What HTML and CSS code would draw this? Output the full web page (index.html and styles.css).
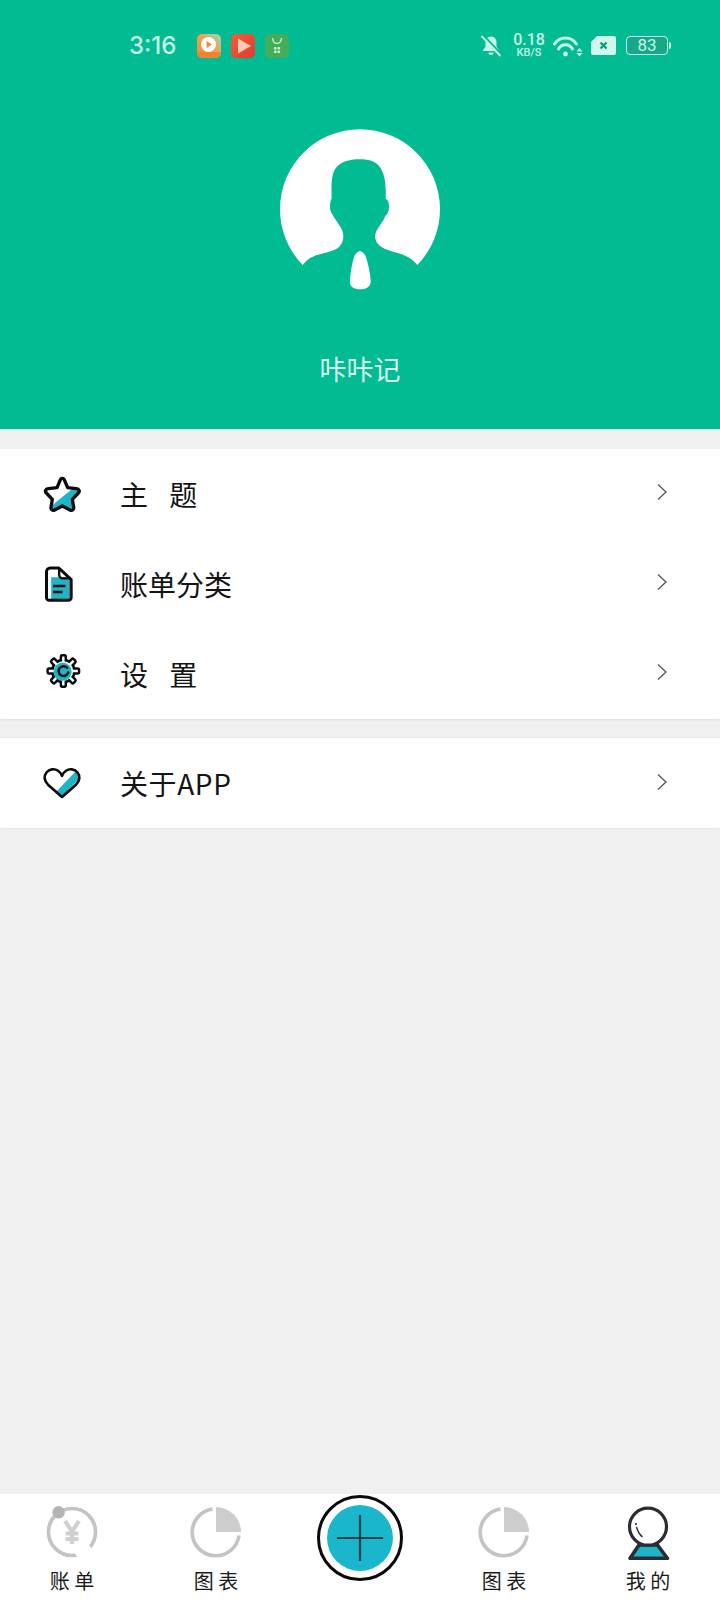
FILE: index.html
```html
<!DOCTYPE html>
<html lang="zh-CN">
<head>
<meta charset="utf-8">
<title>咔咔记</title>
<link rel="stylesheet" href="styles.css">
</head>
<body>
<div class="page">
  <header class="hero">
    <div class="status">
      <div class="status-left">
        <span class="time">3:16</span>
        <svg class="app" viewBox="0 0 24 24"><defs><linearGradient id="g1" x1="0" y1="1" x2="1" y2="0"><stop offset="0" stop-color="#f58a34"/><stop offset=".55" stop-color="#f2a055"/><stop offset="1" stop-color="#8fdcc0"/></linearGradient></defs><rect width="24" height="24" rx="5" fill="url(#g1)"/><path d="M0 18h24v1a5 5 0 0 1-5 5H5a5 5 0 0 1-5-5z" fill="#f0842e"/><circle cx="11.500" cy="10.500" r="7.500" fill="#fff"/><path d="M9.500 7l5.500 3.500L9.500 14z" fill="#f08a3a"/></svg>
        <svg class="app" viewBox="0 0 24 24"><defs><linearGradient id="g2" x1="0" y1="0" x2="1" y2="1"><stop offset="0" stop-color="#f2603a"/><stop offset="1" stop-color="#e03a2a"/></linearGradient></defs><rect width="24" height="24" rx="5" fill="url(#g2)"/><path d="M7 4.500l13 7.500-13 7.500z" fill="#ffc9b8"/></svg>
        <svg class="app" viewBox="0 0 24 24"><rect width="24" height="24" rx="5" fill="#43ad5a"/><path d="M7.500 4c.5 4 2.500 5.500 4.500 5.500S16 8 16.500 4" fill="none" stroke="#c9f0cf" stroke-width="1.400"/><g fill="#d9f5dd"><rect x="9" y="13" width="2.600" height="2.600" rx=".8"/><rect x="12.500" y="13" width="2.600" height="2.600" rx=".8"/><rect x="9" y="16.500" width="2.600" height="2.600" rx=".8"/><rect x="12.500" y="16.500" width="2.600" height="2.600" rx=".8"/></g></svg>
      </div>
      <div class="status-right">
        <svg class="bell" viewBox="0 0 22 22"><path d="M11 1.500c-4 0-5.500 3-5.500 6v4L2.500 16h17l-3-4.500v-4c0-3-1.500-6-5.500-6z" fill="#c6f4e4"/><path d="M8.500 17.500a2.500 2.500 0 0 0 5 0z" fill="#c6f4e4"/><path d="M3 0l19 20" stroke="#01bb93" stroke-width="2"/><path d="M1.500 1l19 20" stroke="#c6f4e4" stroke-width="2"/></svg>
        <div class="speed"><span class="speed-num">0.18</span><span class="speed-unit">KB/S</span></div>
        <svg class="wifi" viewBox="0 0 30 22"><g fill="none" stroke="#c6f4e4" stroke-width="3" stroke-linecap="round"><path d="M1.500 9A13 13 0 0 1 23.500 9"/><path d="M5.500 14A7.800 7.800 0 0 1 19.500 14"/></g><circle cx="12.500" cy="19" r="2.400" fill="#c6f4e4"/><path d="M23.500 16.500l3-3.500 3 3.500zM23.500 18l3 3.500 3-3.500z" fill="#c6f4e4"/></svg>
        <svg class="sim" viewBox="0 0 25 19"><path d="M6 0h17a2 2 0 0 1 2 2v15a2 2 0 0 1-2 2H2a2 2 0 0 1-2-2V6z" fill="#d3f6ea"/><path d="M9.500 6.500l6 6M15.500 6.500l-6 6" stroke="#01a17f" stroke-width="2.200"/></svg>
        <div class="battery"><span class="battery-body">83</span><span class="battery-tip"></span></div>
      </div>
    </div>
    <svg class="avatar" viewBox="60 57 480 483">
      <path fill="#fff" d="M128 465A240 240 0 1 1 472 465C458 448 445 441 425 433C400 425 368 420 352 400C342 385 345 370 352 358C360 345 372 330 376 318C385 312 389 295 386 280C385 272 381 268 377 267C378 240 378 200 362 175C350 155 330 148 298 148C268 148 240 155 225 178C213 198 214 235 215 265C210 275 208 295 213 306C222 325 240 345 247 362C252 378 252 395 238 410C222 425 190 428 165 437C148 444 138 452 128 465Z"/>
      <path fill="#fff" d="M300 423C308 425 315 432 318 442C325 465 331 490 332 512C333 530 318 538 300 538C282 538 268 530 270 512C271 490 275 465 282 442C285 432 292 425 300 423Z"/>
    </svg>
    <div class="name">咔咔记</div>
  </header>

  <section class="group group-first">
    <div class="row">
      <svg class="row-icon" viewBox="30 37 132 132">
        <path d="M130 85l15 2 4 12-20 20 5 28-14 6-23-12-28 14-5-12 5-8z" fill="#1fb5c9"/>
        <path d="M97 56c3 0 6 3 7 7l9 21 26 3c9 1 11 8 6 13l-18 19 4 24c1 7-5 11-11 8l-23-12-23 12c-6 3-12-1-11-8l4-24-18-19c-5-5-3-12 6-13l26-3 9-21c1-4 4-7 7-7z" fill="none" stroke="#0b0b0b" stroke-width="10" stroke-linejoin="round"/>
      </svg>
      <span class="row-label spaced">主 题</span>
      <svg class="chevron" viewBox="0 0 10 18"><path d="M1 1.500l8 7.500-8 7.500" fill="none" stroke="#555" stroke-width="1.300"/></svg>
    </div>
    <div class="row">
      <svg class="row-icon" viewBox="29.500 299 132 132">
        <path d="M63 345h35l21 0v62a6 6 0 0 1-6 6H63z" fill="#1fb5c9"/>
        <path d="M60 317h26l37 35v54a8 8 0 0 1-8 8H57a8 8 0 0 1-8-8V328a11 11 0 0 1 11-11z" fill="none" stroke="#0b0b0b" stroke-width="9" stroke-linejoin="round"/>
        <path d="M87 318v20a10 10 0 0 0 10 10h25" fill="none" stroke="#0b0b0b" stroke-width="7"/>
        <path d="M69 371h37M69 389h28" stroke="#0b0b0b" stroke-width="7"/>
      </svg>
      <span class="row-label">账单分类</span>
      <svg class="chevron" viewBox="0 0 10 18"><path d="M1 1.500l8 7.500-8 7.500" fill="none" stroke="#555" stroke-width="1.300"/></svg>
    </div>
    <div class="row">
      <svg class="row-icon" viewBox="30 575 132 132">
        <g transform="translate(100 632) scale(1.05)">
          <circle r="32" fill="#fff" stroke="#0b0b0b" stroke-width="7"/>
          <g fill="#fff" stroke="#0b0b0b" stroke-width="7">
            <rect x="-7" y="-45" width="14" height="24" rx="4"/>
            <rect x="-7" y="-45" width="14" height="24" rx="4" transform="rotate(45)"/>
            <rect x="-7" y="-45" width="14" height="24" rx="4" transform="rotate(90)"/>
            <rect x="-7" y="-45" width="14" height="24" rx="4" transform="rotate(135)"/>
            <rect x="-7" y="-45" width="14" height="24" rx="4" transform="rotate(180)"/>
            <rect x="-7" y="-45" width="14" height="24" rx="4" transform="rotate(225)"/>
            <rect x="-7" y="-45" width="14" height="24" rx="4" transform="rotate(270)"/>
            <rect x="-7" y="-45" width="14" height="24" rx="4" transform="rotate(315)"/>
          </g>
          <circle r="28" fill="#fff"/>
          <circle cx="-2" cy="2" r="26" fill="#1fb5c9"/>
          <path d="M11 -9A14 14 0 1 0 14 4" fill="none" stroke="#0b0b0b" stroke-width="7" stroke-linecap="round"/>
        </g>
      </svg>
      <span class="row-label spaced">设 置</span>
      <svg class="chevron" viewBox="0 0 10 18"><path d="M1 1.500l8 7.500-8 7.500" fill="none" stroke="#555" stroke-width="1.300"/></svg>
    </div>
  </section>

  <section class="group group-second">
    <div class="row">
      <svg class="row-icon" viewBox="120 182 132 132">
        <path d="M228 212L170 273l16 16 50-52c5-10 2-20-8-25z" fill="#1fb5c9"/>
        <path d="M186 226c-5-12-17-21-30-19-14 2-23 14-22 27 1 7 4 13 10 19l42 37 42-37c6-6 9-12 10-19 1-13-8-25-22-27-13-2-25 7-30 19z" fill="none" stroke="#0b0b0b" stroke-width="8" stroke-linejoin="round"/>
      </svg>
      <span class="row-label latin-wide">关于APP</span>
      <svg class="chevron chevron-last" viewBox="0 0 10 18"><path d="M1 1.500l8 7.500-8 7.500" fill="none" stroke="#555" stroke-width="1.300"/></svg>
    </div>
  </section>

  <div class="spacer"></div>

  <nav class="tabbar">
    <div class="tab">
      <svg class="tab-icon" viewBox="0 0 56 56">
        <circle cx="28" cy="28" r="23.500" fill="none" stroke="#c4c4c4" stroke-width="3.600"/>
        <circle cx="14.600" cy="8.300" r="6.200" fill="#b4b4b4"/>
        <circle cx="39.500" cy="47.500" r="8.500" fill="#fff"/>
        <path d="M21 17L28 27.500l7-10.500M28 27.500V40M21.500 29.500h13M21.500 35h13" fill="none" stroke="#d0d0d0" stroke-width="4.200"/>
      </svg>
      <span class="tab-label">账 单</span>
    </div>
    <div class="tab">
      <svg class="tab-icon" viewBox="0 0 56 56">
        <path d="M24.500 5a23.500 23.500 0 1 0 26.500 26.500" fill="none" stroke="#c4c4c4" stroke-width="3.600"/>
        <path d="M28 3a25 25 0 0 1 25 25H28z" fill="#cdcdcd"/>
      </svg>
      <span class="tab-label">图 表</span>
    </div>
    <div class="tab tab-add">
      <div class="add-ring"><div class="add-core"><svg class="add-plus" viewBox="0 0 46 46"><path d="M0 23h46M23 0v46" stroke="#123f48" stroke-width="2.200"/></svg></div></div>
    </div>
    <div class="tab">
      <svg class="tab-icon" viewBox="0 0 56 56">
        <path d="M24.500 5a23.500 23.500 0 1 0 26.500 26.500" fill="none" stroke="#c4c4c4" stroke-width="3.600"/>
        <path d="M28 3a25 25 0 0 1 25 25H28z" fill="#cdcdcd"/>
      </svg>
      <span class="tab-label">图 表</span>
    </div>
    <div class="tab">
      <svg class="tab-icon" viewBox="0 0 56 56">
        <path d="M19 41h18.500l9.900 13.300H10z" fill="#1fb5c9"/>
        <path d="M19 41h18.500l9.900 13.300H10z" fill="none" stroke="#2a2e32" stroke-width="3.600" stroke-linejoin="round"/>
        <circle cx="28" cy="22.700" r="18.500" fill="#fff" stroke="#2a2e32" stroke-width="3.200"/>
        <path d="M16.500 23c1 4 3 7.500 6 10" fill="none" stroke="#2a2e32" stroke-width="1.400"/>
        <circle cx="16" cy="20" r="1.100" fill="#2a2e32"/>
      </svg>
      <span class="tab-label">我 的</span>
    </div>
  </nav>
</div>
</body>
</html>
```

FILE: styles.css
```css
* { box-sizing: border-box; }

html, body {
  margin: 0;
  padding: 0;
}

body {
  font-family: "Noto Sans CJK SC", "Noto Sans", sans-serif;
  background: #f0f0f0;
  color: #111;
}

.page {
  width: 720px;
  height: 1600px;
  display: flex;
  flex-direction: column;
  background: #f0f0f0;
  overflow: hidden;
}

.hero {
  height: 429px;
  flex: none;
  background: #01bb93;
  display: flex;
  flex-direction: column;
  align-items: center;
  box-shadow: 0 2px 3px #def9f3;
}

.status {
  width: 100%;
  height: 129px;
  flex: none;
  padding: 34px 49px 0 129px;
  display: flex;
  justify-content: space-between;
  align-items: flex-start;
}

.status-left,
.status-right {
  display: flex;
  align-items: center;
  height: 23px;
}

.time {
  width: 47px;
  margin-right: 21px;
  font-family: Inter, Roboto, sans-serif;
  font-size: 24px;
  font-weight: 500;
  line-height: 23px;
  color: #c6f4e4;
}

.app {
  width: 24px;
  height: 24px;
  margin-right: 10px;
}

.status-right { gap: 9px; }

.bell {
  width: 22px;
  height: 22px;
  margin-right: 3px;
}

.speed {
  width: 30px;
  display: flex;
  flex-direction: column;
  align-items: center;
  font-family: Roboto, sans-serif;
  color: #c6f4e4;
}

.speed-num {
  font-size: 16px;
  line-height: 14px;
  font-weight: 500;
}

.speed-unit {
  font-size: 11px;
  line-height: 11px;
  font-weight: 500;
}

.wifi {
  width: 30px;
  height: 22px;
}

.sim {
  width: 25px;
  height: 19px;
  margin-right: 1px;
  margin-left: -1px;
}

.battery {
  display: flex;
  align-items: center;
  gap: 1px;
}

.battery-body {
  width: 42px;
  height: 19px;
  border: 1.200px solid #c6f4e4;
  border-radius: 4px;
  background: #16a888;
  color: #c6f4e4;
  font-family: Roboto, sans-serif;
  font-size: 17px;
  line-height: 17px;
  text-align: center;
}

.battery-tip {
  width: 2px;
  height: 7px;
  border-radius: 0 2px 2px 0;
  background: #c6f4e4;
}

.avatar {
  width: 160px;
  height: 161px;
  flex: none;
}

.name {
  margin-top: 60px;
  font-size: 27px;
  line-height: 38px;
  color: #dcf9f0;
}

.group {
  flex: none;
  background: #fff;
}

.group-first {
  margin-top: 20px;
  box-shadow: 0 1px 2px rgba(0, 0, 0, 0.08);
}

.group-second {
  margin-top: 19px;
  box-shadow: 0 0 2px rgba(0, 0, 0, 0.1);
}

.row {
  height: 90px;
  display: flex;
  align-items: center;
  padding: 0 53px 0 40px;
}

.row-icon {
  width: 44px;
  height: 44px;
  flex: none;
  margin-right: 36px;
}

.row-label {
  font-size: 28px;
  line-height: 40px;
  color: #141414;
}

.spaced { word-spacing: 15px; }

.latin-wide { letter-spacing: 0.6px; }

.chevron {
  width: 10px;
  height: 18px;
  margin-left: auto;
  margin-bottom: 4px;
  flex: none;
}

.chevron-last { margin-bottom: 2px; }

.spacer { flex: 1; }

.tabbar {
  height: 106px;
  flex: none;
  background: #fff;
  display: grid;
  grid-template-columns: repeat(5, 144px);
}

.tab {
  display: flex;
  flex-direction: column;
  align-items: center;
  padding-top: 10px;
}

.tab-icon {
  width: 56px;
  height: 56px;
  flex: none;
}

.tab-label {
  margin-top: 9px;
  font-size: 20px;
  line-height: 24px;
  color: #1a1a1a;
}

.tab-add { padding-top: 1px; }

.add-ring {
  width: 86px;
  height: 86px;
  border: 3px solid #0a0a0a;
  border-radius: 50%;
  background: #fff;
  display: flex;
  align-items: center;
  justify-content: center;
}

.add-core {
  width: 66px;
  height: 66px;
  border-radius: 50%;
  background: #1ab7cc;
  display: flex;
  align-items: center;
  justify-content: center;
}

.add-plus {
  width: 46px;
  height: 46px;
}
```
